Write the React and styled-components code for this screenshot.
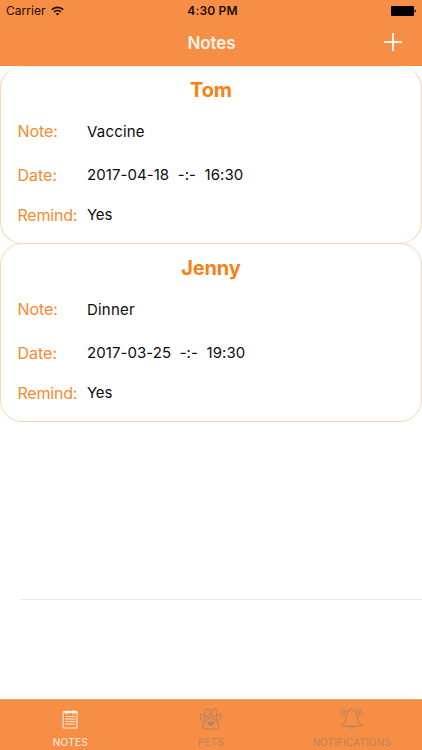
import React from "react";
import styled, { createGlobalStyle } from "styled-components";

const GlobalStyle = createGlobalStyle`
  * { box-sizing: border-box; }
  body { margin: 0; background: #fff; }
`;

const Screen = styled.div`
  display: flex;
  flex-direction: column;
  width: 422px;
  height: 750px;
  overflow: hidden;
  background: #fff;
  font-family: Inter, "Liberation Sans", sans-serif;
`;

const Header = styled.header`
  flex: none;
  height: 66px;
  background: #f78e46;
`;

const StatusBar = styled.div`
  display: grid;
  grid-template-columns: 1fr auto 1fr;
  align-items: center;
  height: 22px;
  padding: 0 6px;
  font-size: 12px;
  line-height: 22px;
  color: #1c0d04;
`;

const Carrier = styled.div`
  display: flex;
  align-items: center;
  gap: 5px;
  letter-spacing: 0.05px;
`;

const Clock = styled.div`
  padding-left: 3px;
  font-weight: 600;
  letter-spacing: 0.2px;
`;

const Battery = styled.svg`
  justify-self: end;
`;

const NavBar = styled.div`
  display: grid;
  grid-template-columns: 1fr auto 1fr;
  align-items: center;
  height: 42px;
  padding: 0 20px;
`;

const NavTitle = styled.h1`
  grid-column: 2;
  margin: 0;
  padding-left: 1px;
  font-size: 17px;
  font-weight: 600;
  line-height: 42px;
  letter-spacing: -0.05px;
  color: #fff4e8;
`;

const AddButton = styled.button`
  display: flex;
  justify-self: end;
  margin-top: -2px;
  padding: 0;
  border: 0;
  background: none;
`;

const List = styled.main`
  flex: 1;
  min-height: 0;
`;

const Card = styled.article`
  height: 178px;
  border: 1px solid #f9d5b6;
  border-top-color: ${(p) => (p.$first ? "#fdeee2" : "#f9d5b6")};
  border-radius: 22px;
  padding: 0 16.5px;

  & + & {
    height: 179px;
    margin-top: -1px;
    padding-top: 1px;
  }
`;

const Name = styled.h2`
  margin: 0;
  padding-top: 10px;
  height: 42px;
  font-size: 20px;
  font-weight: 700;
  line-height: 26px;
  letter-spacing: ${(p) => p.$spacing};
  text-align: center;
  color: #f58216;
`;

const Row = styled.div`
  display: grid;
  grid-template-columns: 69.5px 1fr;
  height: ${(p) => p.$height}px;
  line-height: 44px;
`;

const Label = styled.span`
  font-size: 16px;
  font-weight: 400;
  letter-spacing: ${(p) => p.$spacing};
  color: #f68a30;
`;

const Value = styled.span`
  font-size: 15px;
  letter-spacing: ${(p) => p.$spacing};
  line-height: ${(p) => p.$line}px;
  white-space: pre;
  color: #0c0c0c;
`;

const Separator = styled.div`
  height: 1px;
  margin: 177px 0 0 21px;
  background: #e9e9e9;
`;

const TabBar = styled.nav`
  flex: none;
  display: grid;
  grid-template-columns: repeat(3, 1fr);
  height: 51px;
  border-top: 1px solid #f3a26c;
  background: #f78e46;
`;

const Tab = styled.div`
  display: flex;
  flex-direction: column;
  align-items: center;
  padding-top: 6px;
  font-size: 10px;
  line-height: 14px;
  letter-spacing: ${(p) => p.$spacing};
  color: ${(p) => (p.$active ? "#fff1e2" : "#b9845f")};
`;

const TabIcon = styled.svg`
  flex: none;
  width: 26px;
  height: 26px;
  margin-bottom: 3px;
  fill: none;
  stroke: currentColor;
  stroke-linecap: round;
  stroke-linejoin: round;
`;

const notes = [
  { name: "Tom", nameSpacing: "-0.1px", note: "Vaccine", date: "2017-04-18  -:-  16:30" },
  { name: "Jenny", nameSpacing: "-0.15px", note: "Dinner", date: "2017-03-25  -:-  19:30" },
];

function NoteCard({ item, first }) {
  return (
    <Card $first={first}>
      <Name $spacing={item.nameSpacing}>{item.name}</Name>
      <Row $height={44}>
        <Label $spacing="-0.1px">Note:</Label>
        <Value $line={45} $spacing="0.2px">{item.note}</Value>
      </Row>
      <Row $height={40}>
        <Label $spacing="0px">Date:</Label>
        <Value $line={43} $spacing="0.06px">{item.date}</Value>
      </Row>
      <Row $height={44}>
        <Label $spacing="-0.2px">Remind:</Label>
        <Value $line={43} $spacing="-0.2px">Yes</Value>
      </Row>
    </Card>
  );
}

export default function App() {
  return (
    <>
      <GlobalStyle />
      <Screen>
        <Header>
          <StatusBar>
            <Carrier>
              <span>Carrier</span>
              <svg width="13" height="10" viewBox="0 0 13 10" fill="none" stroke="#1c0d04" strokeWidth="1.7">
                <path d="M.8 3.7a8.2 8.2 0 0 1 11.4 0M3 6a5 5 0 0 1 7 0" />
                <path d="M6.5 9.6 4.7 7.7a2.7 2.7 0 0 1 3.6 0Z" fill="#1c0d04" stroke="none" />
              </svg>
            </Carrier>
            <Clock>4:30 PM</Clock>
            <Battery width="25" height="10" viewBox="0 0 25 10">
              <rect width="23" height="10" rx="1" fill="#000" />
              <path d="M23.7 3.5q1.3.3 1.3 1.5t-1.3 1.5Z" fill="#000" />
            </Battery>
          </StatusBar>
          <NavBar>
            <NavTitle>Notes</NavTitle>
            <AddButton aria-label="Add note">
              <svg width="18" height="18" viewBox="0 0 18 18" stroke="#fff4e8" strokeWidth="2">
                <path d="M9 0v18M0 9h18" />
              </svg>
            </AddButton>
          </NavBar>
        </Header>
        <List>
          {notes.map((item, index) => (
            <NoteCard key={item.name} item={item} first={index === 0} />
          ))}
          <Separator />
        </List>
        <TabBar>
          <Tab $active $spacing="0.25px">
            <TabIcon viewBox="0 0 26 26">
              <path d="M6.5 5.5h13.5v16.5H6.5Z" strokeWidth="1" />
              <path d="M6.5 6.5h13.5M9 4.800v3M11 4.800v3M15.500 4.800v3M17.500 4.800v3" strokeWidth="1.200" />
              <path d="M8.500 10.500h9.500M8.500 13h9.500M8.500 15.500h9.500M8.500 18h9.500" strokeWidth=".9" />
            </TabIcon>
            NOTES
          </Tab>
          <Tab $spacing="0.3px">
            <TabIcon viewBox="0 0 26 26" strokeWidth="1.1">
              <ellipse cx="4.6" cy="11.3" rx="2.2" ry="3.3" transform="rotate(-15 4.6 11.3)" />
              <ellipse cx="9.3" cy="6.8" rx="2.6" ry="3.9" transform="rotate(-5 9.3 6.8)" />
              <ellipse cx="16" cy="6.8" rx="2.6" ry="3.9" transform="rotate(5 16 6.8)" />
              <ellipse cx="20.700" cy="11.3" rx="2.2" ry="3.3" transform="rotate(15 20.700 11.3)" />
              <path d="M12.700 12.300c-3 0-4.600 1.500-6 3.400-1.500 1.800-2.300 3.200-2.100 5 .2 1.800 1.400 2.300 3 2.300h10.200c1.600 0 2.800-.5 3-2.300.2-1.800-.6-3.200-2.100-5-1.400-1.900-3-3.400-6-3.400Z" />
              <path d="M12.700 20.600c-1.700-1.200-3.700-2.300-3.700-3.800 0-1.900 2.800-2.200 3.700-.5.9-1.700 3.700-1.400 3.700.5 0 1.500-2 2.600-3.700 3.800Z" fill="currentColor" stroke="none" />
            </TabIcon>
            PETS
          </Tab>
          <Tab $spacing="0.15px">
            <TabIcon viewBox="0 0 26 26" strokeWidth="1.1">
              <path d="M12.700 2.600c-.9 0-1.300.7-1.300 1.500C8.900 4.800 7.500 7 7.500 9.500c0 4.800-1 6.800-4.500 9.300v1.300h19.400v-1.300C18.900 16.300 17.900 14.300 17.900 9.500c0-2.500-1.400-4.700-3.900-5.400 0-.8-.4-1.500-1.300-1.500Z" />
              <path d="M10.200 20.400c.4 2.600 4.600 2.600 5 0" />
              <path d="M6.700 3.800C5.300 5 4.800 7 5.300 8.900M4.200 3.200C2.700 4.800 2.300 7.500 3.100 9.600M18.700 3.800c1.400 1.200 1.900 3.200 1.400 5.100M21.200 3.200c1.500 1.600 1.900 4.300 1.100 6.400" />
            </TabIcon>
            NOTIFICATIONS
          </Tab>
        </TabBar>
      </Screen>
    </>
  );
}
